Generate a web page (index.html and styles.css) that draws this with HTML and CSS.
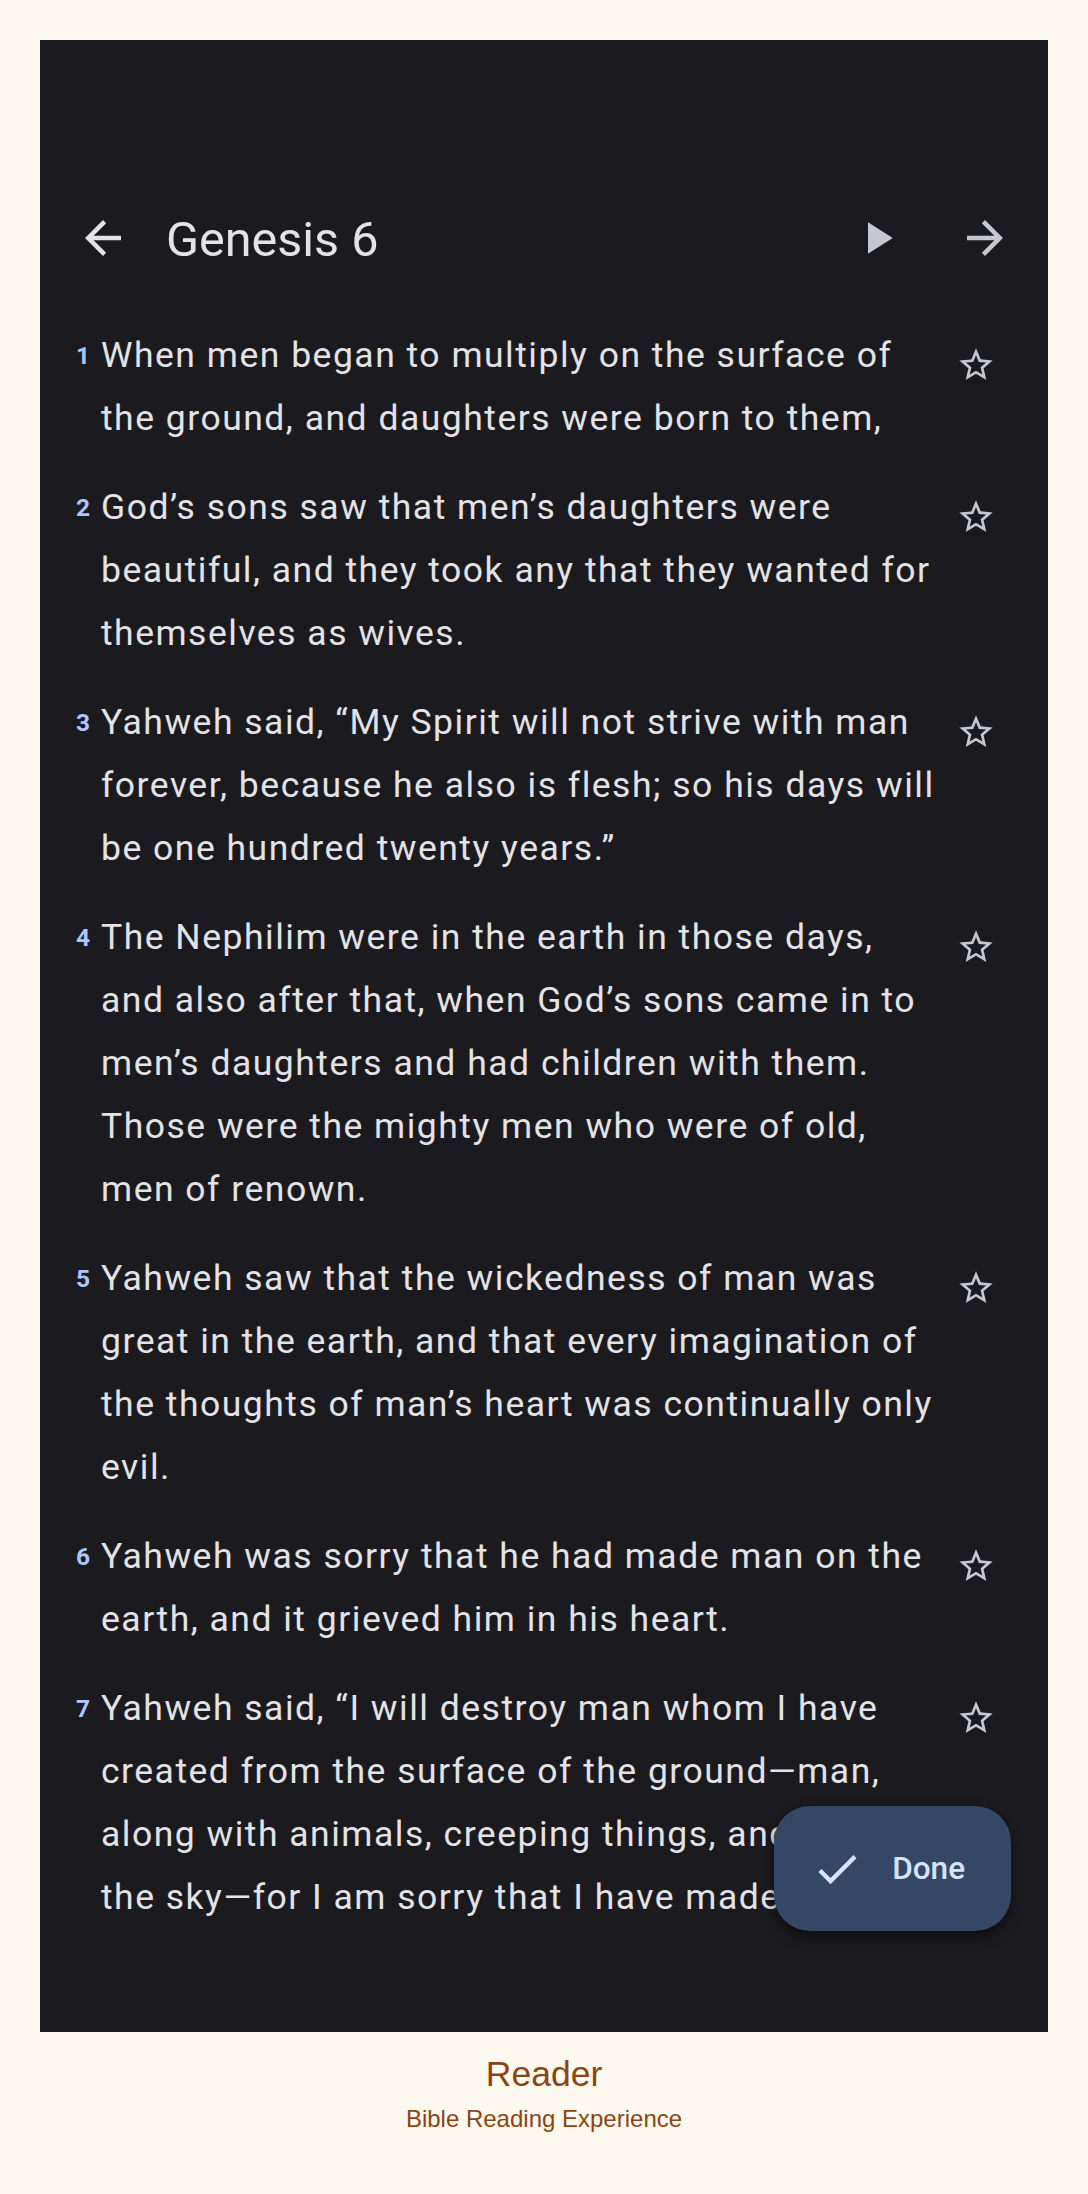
FILE: index.html
```html
<!DOCTYPE html>
<html lang="en">
<head>
<meta charset="utf-8">
<title>Reader</title>
<link rel="stylesheet" href="styles.css">
</head>
<body>
<div class="page">
  <main class="phone">
    <div class="status-space"></div>
    <header class="topbar">
      <button class="icon-btn back" aria-label="Back">
        <svg viewBox="0 0 24 24"><path d="M20 11H7.83l5.59-5.59L12 4l-8 8 8 8 1.41-1.41L7.83 13H20v-2z"/></svg>
      </button>
      <h1 class="title">Genesis 6</h1>
      <button class="icon-btn play" aria-label="Play">
        <svg viewBox="0 0 24 24"><path d="M8 5v14l11-7z"/></svg>
      </button>
      <button class="icon-btn next" aria-label="Next chapter">
        <svg viewBox="0 0 24 24"><path d="M12 4l-1.41 1.41L16.17 11H4v2h12.17l-5.58 5.59L12 20l8-8z"/></svg>
      </button>
    </header>

    <section class="verses">
      <div class="verse">
        <span class="num">1</span>
        <p class="text">When men began to multiply on the surface of the ground, and daughters were born to them,</p>
        <span class="star"><svg viewBox="0 0 24 24"><path d="M22 9.24l-7.19-.62L12 2 9.19 8.63 2 9.24l5.46 4.73L5.82 21 12 17.27 18.18 21l-1.63-7.03L22 9.24zM12 15.4l-3.76 2.27 1-4.28-3.32-2.88 4.38-.38L12 6.1l1.71 4.04 4.38.38-3.32 2.88 1 4.28L12 15.4z"/></svg></span>
      </div>
      <div class="verse">
        <span class="num">2</span>
        <p class="text">God’s sons saw that men’s daughters were beautiful, and they took any that they wanted for themselves as wives.</p>
        <span class="star"><svg viewBox="0 0 24 24"><path d="M22 9.24l-7.19-.62L12 2 9.19 8.63 2 9.24l5.46 4.73L5.82 21 12 17.27 18.18 21l-1.63-7.03L22 9.24zM12 15.4l-3.76 2.27 1-4.28-3.32-2.88 4.38-.38L12 6.1l1.71 4.04 4.38.38-3.32 2.88 1 4.28L12 15.4z"/></svg></span>
      </div>
      <div class="verse">
        <span class="num">3</span>
        <p class="text">Yahweh said, “My Spirit will not strive with man forever, because he also is flesh; so his days will be one hundred twenty years.”</p>
        <span class="star"><svg viewBox="0 0 24 24"><path d="M22 9.24l-7.19-.62L12 2 9.19 8.63 2 9.24l5.46 4.73L5.82 21 12 17.27 18.18 21l-1.63-7.03L22 9.24zM12 15.4l-3.76 2.27 1-4.28-3.32-2.88 4.38-.38L12 6.1l1.71 4.04 4.38.38-3.32 2.88 1 4.28L12 15.4z"/></svg></span>
      </div>
      <div class="verse">
        <span class="num">4</span>
        <p class="text">The Nephilim were in the earth in those days, and also after that, when God’s sons came in to men’s daughters and had children with them. Those were the mighty men who were of old, men of renown.</p>
        <span class="star"><svg viewBox="0 0 24 24"><path d="M22 9.24l-7.19-.62L12 2 9.19 8.63 2 9.24l5.46 4.73L5.82 21 12 17.27 18.18 21l-1.63-7.03L22 9.24zM12 15.4l-3.76 2.27 1-4.28-3.32-2.88 4.38-.38L12 6.1l1.71 4.04 4.38.38-3.32 2.88 1 4.28L12 15.4z"/></svg></span>
      </div>
      <div class="verse">
        <span class="num">5</span>
        <p class="text">Yahweh saw that the wickedness of man was great in the earth, and that every imagination of the thoughts of man’s heart was continually only evil.</p>
        <span class="star"><svg viewBox="0 0 24 24"><path d="M22 9.24l-7.19-.62L12 2 9.19 8.63 2 9.24l5.46 4.73L5.82 21 12 17.27 18.18 21l-1.63-7.03L22 9.24zM12 15.4l-3.76 2.27 1-4.28-3.32-2.88 4.38-.38L12 6.1l1.71 4.04 4.38.38-3.32 2.88 1 4.28L12 15.4z"/></svg></span>
      </div>
      <div class="verse">
        <span class="num">6</span>
        <p class="text">Yahweh was sorry that he had made man on the earth, and it grieved him in his heart.</p>
        <span class="star"><svg viewBox="0 0 24 24"><path d="M22 9.24l-7.19-.62L12 2 9.19 8.63 2 9.24l5.46 4.73L5.82 21 12 17.27 18.18 21l-1.63-7.03L22 9.24zM12 15.4l-3.76 2.27 1-4.28-3.32-2.88 4.38-.38L12 6.1l1.71 4.04 4.38.38-3.32 2.88 1 4.28L12 15.4z"/></svg></span>
      </div>
      <div class="verse">
        <span class="num">7</span>
        <p class="text">Yahweh said, “I will destroy man whom I have created from the surface of the ground—man, along with animals, creeping things, and birds of the sky—for I am sorry that I have made them.”</p>
        <span class="star"><svg viewBox="0 0 24 24"><path d="M22 9.24l-7.19-.62L12 2 9.19 8.63 2 9.24l5.46 4.73L5.82 21 12 17.27 18.18 21l-1.63-7.03L22 9.24zM12 15.4l-3.76 2.27 1-4.28-3.32-2.88 4.38-.38L12 6.1l1.71 4.04 4.38.38-3.32 2.88 1 4.28L12 15.4z"/></svg></span>
      </div>
    </section>

    <button class="fab">
      <svg viewBox="0 0 24 24"><path d="M9 16.17L4.83 12l-1.42 1.41L9 19 21 7l-1.41-1.41z"/></svg>
      <span>Done</span>
    </button>
  </main>

  <footer class="footer">
    <div class="brand">Reader</div>
    <div class="tag">Bible Reading Experience</div>
  </footer>
</div>
</body>
</html>
```

FILE: styles.css
```css
html, body {
  margin: 0;
  padding: 0;
}

body {
  background: #fef9ee;
  font-family: Roboto, "Noto Sans", sans-serif;
}

.page {
  padding: 40px 40px 0;
}

.phone {
  position: relative;
  width: 1008px;
  height: 1992px;
  background: #1b1b1f;
  overflow: hidden;
}

.status-space {
  height: 125px;
}

.topbar {
  height: 146px;
  display: flex;
  align-items: center;
  padding: 0 36px;
}

.icon-btn {
  width: 54px;
  height: 54px;
  padding: 0;
  border: 0;
  background: none;
  display: flex;
  flex: none;
}

.icon-btn svg {
  width: 54px;
  height: 54px;
}

.back svg { fill: #e3e2e6; }
.play svg, .next svg { fill: #c4c6d0; }

.next {
  margin-left: 54px;
}

.title {
  flex: 1;
  margin: 4px 0 0 36px;
  font-size: 48.5px;
  font-weight: 400;
  line-height: 60px;
  color: #e3e2e6;
}

.verses {
  display: flex;
  flex-direction: column;
}

.verse {
  display: flex;
  align-items: flex-start;
  padding: 13px 52px 13px 36px;
}

.num {
  flex: none;
  width: 14px;
  margin-right: 11px;
  font-size: 24.5px;
  font-weight: 700;
  line-height: 63px;
  color: #aac7ff;
}

.text {
  flex: 1;
  margin: 0;
  font-size: 35.5px;
  line-height: 63px;
  letter-spacing: 1.5px;
  color: #e3e2e6;
}

.star {
  flex: none;
  width: 40px;
  margin-left: 17px;
  padding-top: 21px;
  display: flex;
}

.star svg {
  width: 40px;
  height: 40px;
  fill: #c4c6d0;
}

.fab {
  position: absolute;
  right: 37px;
  bottom: 101px;
  height: 125px;
  display: flex;
  align-items: center;
  gap: 29px;
  padding: 0 46px 0 37px;
  border: 0;
  border-radius: 36px;
  background: #344866;
  box-shadow: 0 6px 14px rgba(0, 0, 0, 0.35), 0 2px 4px rgba(0, 0, 0, 0.25);
  font-family: Roboto, sans-serif;
  font-size: 31.5px;
  font-weight: 500;
  color: #d7e3ff;
}

.fab svg {
  width: 52px;
  height: 52px;
  fill: #d7e3ff;
}

.footer {
  text-align: center;
  font-family: "Liberation Sans", Arial, sans-serif;
  color: #8b4513;
}

.brand {
  margin-top: 22px;
  font-size: 35.5px;
  line-height: 41px;
}

.tag {
  margin-top: 10px;
  font-size: 24px;
  line-height: 28px;
}
```
